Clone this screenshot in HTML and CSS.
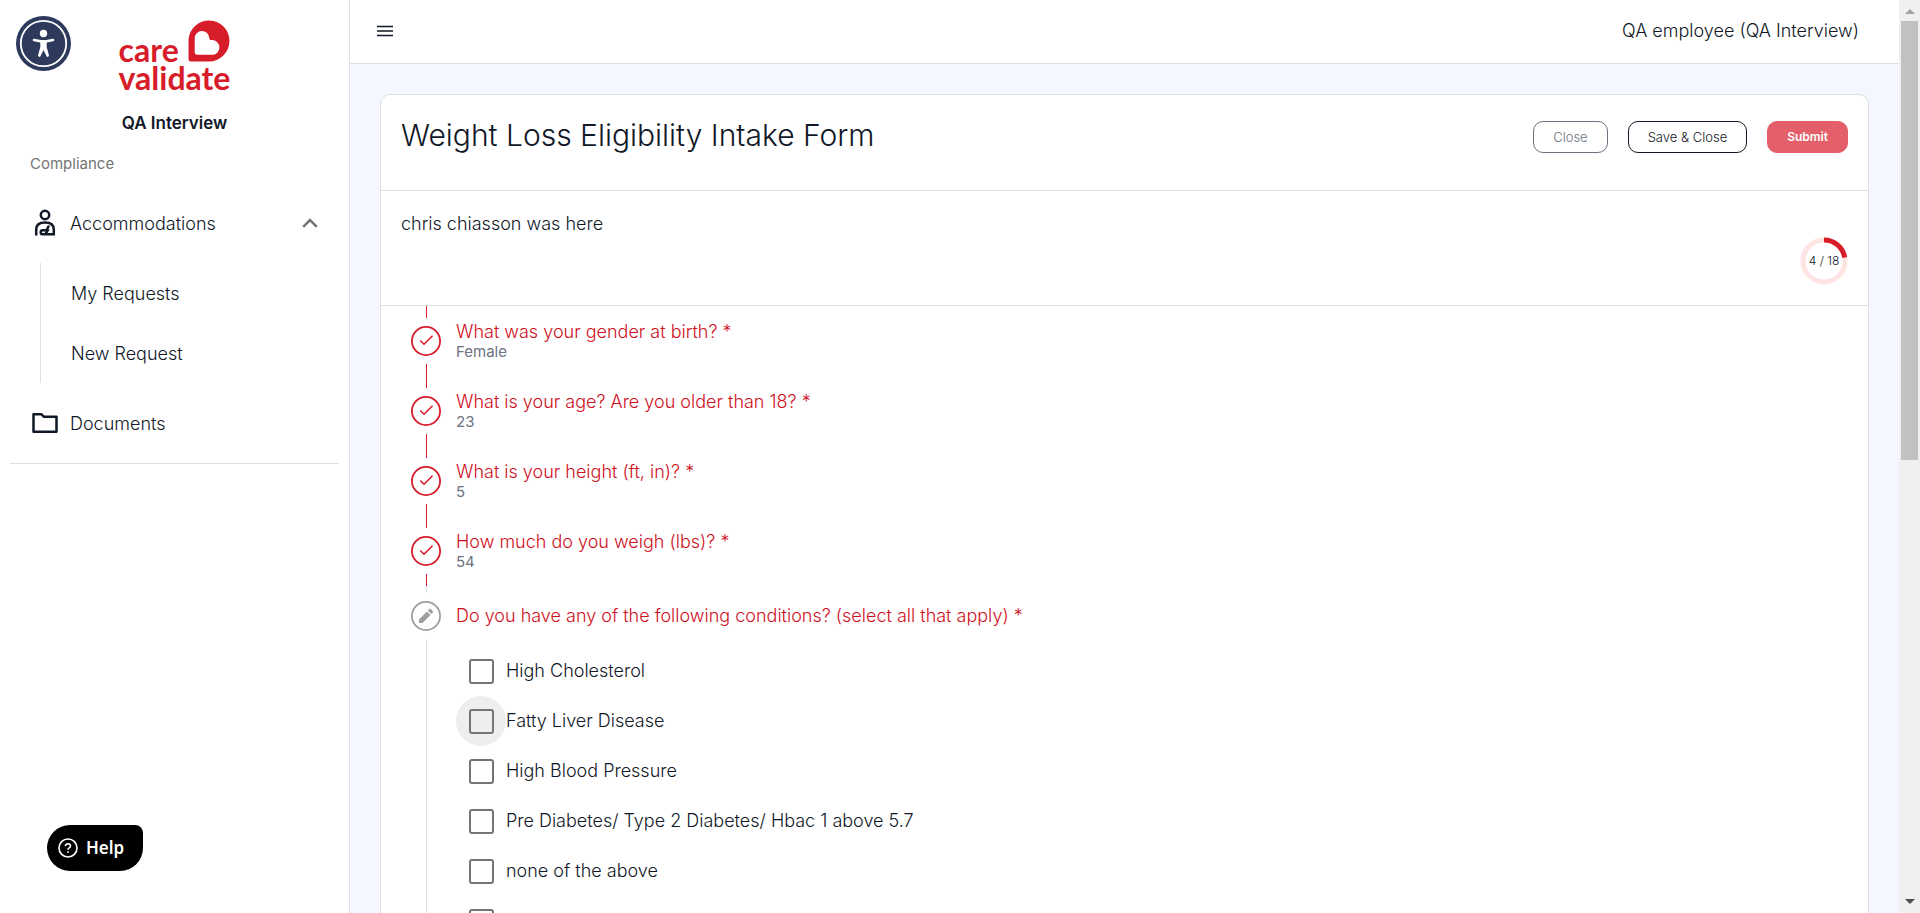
FILE: index.html
```html
<!DOCTYPE html>
<html lang="en">
<head>
<meta charset="utf-8">
<title>Weight Loss Eligibility Intake Form</title>
<link rel="stylesheet" href="styles.css">
</head>
<body>
<div class="app">
  <aside class="sidebar">
    <div class="brand">
      <div class="logo">
        <div class="logo-top">
          <span class="logo-word">care</span>
          <svg class="logo-mark" viewBox="0 0 42 42" aria-hidden="true"><path fill="#d71c2a" fill-rule="evenodd" d="M3 41.500Q.5 41.500.5 39V20A20.500 20.500 0 1 1 21 41.500ZM9.500 34.800Q6.700 34.800 6.700 32V18.500A7.300 7.300 0 0 1 21.300 18.200Q21.300 20 22.600 20H24A7.300 7.300 0 0 1 24 34.800Z"/></svg>
        </div>
        <span class="logo-word">validate</span>
      </div>
      <p class="org">QA Interview</p>
    </div>
    <p class="section-label">Compliance</p>
    <nav class="nav">
      <button class="nav-row" type="button" aria-expanded="true">
        <svg class="nav-icon" viewBox="0 0 30 30" fill="none" stroke="#111827" stroke-width="2.500" aria-hidden="true"><circle cx="15" cy="7" r="4.200"/><path d="M6.200 27.500V21.500Q6.200 14.500 15 14.500Q23.800 14.500 23.800 21.500V26.300H12.500Q10.700 26.300 10.700 24.300T12.700 22.300H16.500L19 17.500M15.500 26L18.500 21"/></svg>
        <span>Accommodations</span>
        <svg class="chevron" viewBox="0 0 16 10" fill="none" stroke="#757575" stroke-width="2.600" aria-hidden="true"><path d="M1.200 8.800 8 2l6.800 6.800"/></svg>
      </button>
      <div class="subnav">
        <a href="#my-requests">My Requests</a>
        <a href="#new-request">New Request</a>
      </div>
      <a class="nav-row" href="#documents">
        <svg class="nav-icon" viewBox="0 0 30 30" fill="none" stroke="#111827" stroke-width="2.500" stroke-linejoin="round" aria-hidden="true"><path d="M3.500 6.300H11.500L14 8.800H26.500V23.700H3.500Z"/></svg>
        <span>Documents</span>
      </a>
    </nav>
  </aside>

  <div class="main">
    <header class="topbar">
      <button class="menu" type="button" aria-label="Toggle menu">
        <svg viewBox="0 0 16 12" aria-hidden="true"><path d="M0 1.500H16M0 6H16M0 10.500H16" stroke="#111827" stroke-width="1.600"/></svg>
      </button>
      <span>QA employee (QA Interview)</span>
    </header>

    <main class="content">
      <section class="card">
        <div class="card-head">
          <h1>Weight Loss Eligibility Intake Form</h1>
          <div class="actions">
            <button class="btn btn-muted" type="button">Close</button>
            <button class="btn btn-dark" type="button">Save &amp; Close</button>
            <button class="btn btn-primary" type="button">Submit</button>
          </div>
        </div>
        <div class="intro">
          <p>chris chiasson was here</p>
          <div class="progress">
            <svg viewBox="0 0 48 48" fill="none" stroke-width="5" aria-hidden="true"><circle cx="24" cy="24" r="21" stroke="#ffe4e4"/><circle cx="24" cy="24" r="21" stroke="#d71c2a" pathLength="18" stroke-dasharray="4 14" transform="rotate(-90 24 24)"/></svg>
            <span>4 / 18</span>
          </div>
        </div>

        <div class="stepper">
          <div class="line line-short"></div>
          <div class="step">
            <svg class="mark" viewBox="0 0 30 30" aria-hidden="true"><use href="#done"/></svg>
            <div class="step-text"><p class="question">What was your gender at birth? *</p><p class="answer">Female</p></div>
          </div>
          <div class="line"></div>
          <div class="step">
            <svg class="mark" viewBox="0 0 30 30" aria-hidden="true"><use href="#done"/></svg>
            <div class="step-text"><p class="question">What is your age? Are you older than 18? *</p><p class="answer">23</p></div>
          </div>
          <div class="line"></div>
          <div class="step">
            <svg class="mark" viewBox="0 0 30 30" aria-hidden="true"><use href="#done"/></svg>
            <div class="step-text"><p class="question">What is your height (ft, in)? *</p><p class="answer">5</p></div>
          </div>
          <div class="line"></div>
          <div class="step">
            <svg class="mark" viewBox="0 0 30 30" aria-hidden="true"><use href="#done"/></svg>
            <div class="step-text"><p class="question">How much do you weigh (lbs)? *</p><p class="answer">54</p></div>
          </div>
          <div class="line line-short"></div>
          <div class="line line-next"></div>
          <div class="step">
            <svg class="mark" viewBox="0 0 30 30" aria-hidden="true"><circle cx="15" cy="15" r="14.100" fill="none" stroke="#9e9e9e" stroke-width="1.800"/><path fill="#9e9e9e" d="M8 18.500V22H11.500L19.500 14 16 10.500ZM16.900 9.600 20.400 13.100 21.900 11.600Q22.600 10.900 21.900 10.200L19.800 8.100Q19.100 7.400 18.400 8.100Z"/></svg>
            <p class="question" id="conditions">Do you have any of the following conditions? (select all that apply) *</p>
          </div>
          <div class="options" role="group" aria-labelledby="conditions">
            <label class="option"><span class="tick"><input type="checkbox"></span>High Cholesterol</label>
            <label class="option"><span class="tick tick-active"><input type="checkbox"></span>Fatty Liver Disease</label>
            <label class="option"><span class="tick"><input type="checkbox"></span>High Blood Pressure</label>
            <label class="option"><span class="tick"><input type="checkbox"></span>Pre Diabetes/ Type 2 Diabetes/ Hbac 1 above 5.7</label>
            <label class="option"><span class="tick"><input type="checkbox"></span>none of the above</label>
            <label class="option"><span class="tick"><input type="checkbox" aria-label="Other"></span></label>
          </div>
        </div>
      </section>
    </main>
  </div>

  <div class="scrollbar" aria-hidden="true">
    <span class="arrow arrow-up"></span>
    <span class="thumb"></span>
    <span class="arrow arrow-down"></span>
  </div>
</div>

<button class="a11y" type="button" aria-label="Accessibility">
  <svg viewBox="0 0 55 55" aria-hidden="true"><circle cx="27.500" cy="27.500" r="27.500" fill="#2d3a5c"/><circle cx="27.500" cy="27.500" r="22.700" fill="none" stroke="#fff" stroke-width="1.800"/><circle cx="27.500" cy="17.500" r="3.700" fill="#fff"/><path fill="none" stroke="#fff" stroke-width="2.600" stroke-linecap="round" stroke-linejoin="round" d="M18 24 24.500 25.300H30.500L37 24"/><path d="M24.300 25H30.700V31L33 39.500Q32.300 41.600 30.700 40.500L27.500 34 24.300 40.500Q22.700 41.600 22 39.500L24.300 31Z" fill="#fff"/></svg>
</button>
<button class="help" type="button">
  <svg viewBox="0 0 20 20" fill="none" stroke="#fff" stroke-width="1.600" aria-hidden="true"><circle cx="10" cy="10" r="9"/><path d="M7.500 8Q7.500 5.700 10 5.700T12.500 8Q12.500 9.200 11.200 9.900T10 11.700"/><circle cx="10" cy="14" r=".5" fill="#fff" stroke-width="1"/></svg>
  <span>Help</span>
</button>

<svg width="0" height="0" class="defs" aria-hidden="true">
  <symbol id="done" viewBox="0 0 30 30"><circle cx="15" cy="15" r="14.100" fill="none" stroke="#d71c2a" stroke-width="1.800"/><path d="M9.300 14.500 13 18.200 21.500 9.700" fill="none" stroke="#d71c2a" stroke-width="1.600"/></symbol>
</svg>
</body>
</html>
```
FILE: styles.css
```css
* { box-sizing: border-box; }

body {
  margin: 0;
  overflow: hidden;
  background: #fff;
  color: #111827;
  font-family: Inter, "Liberation Sans", sans-serif;
  font-size: 18px;
  font-weight: 300;
  line-height: 26px;
}

p, h1 { margin: 0; }
a { color: inherit; text-decoration: none; }
button { font: inherit; color: inherit; padding: 0; border: 0; background: none; cursor: pointer; }
svg { display: block; }
.defs { position: absolute; }

.app {
  display: grid;
  grid-template-columns: 350px minmax(0, 1fr) 21px;
  height: 100vh;
}

/* Sidebar */
.sidebar { border-right: 1px solid #e0e0e0; background: #fff; }
.brand { display: flex; flex-direction: column; align-items: center; padding-top: 20px; }
.logo { color: #d71c2a; font-family: Lato, sans-serif; font-weight: 700; font-size: 32px; line-height: 28px; }
.logo-top { display: flex; align-items: flex-end; justify-content: space-between; height: 44px; }
.logo-mark { width: 42px; height: 42px; margin-bottom: 2px; }
.logo-word { display: block; }
.org { margin-top: 18px; font-size: 17px; font-weight: 600; }
.section-label { padding: 15px 30px 0; color: #757575; font-size: 15px; font-weight: 400; }
.nav { margin: 16px 10px 0; padding-bottom: 10px; border-bottom: 1px solid #e0e0e0; }
.nav-row { display: flex; align-items: center; width: 100%; height: 60px; padding: 0 21px 0 20px; text-align: left; }
.nav-row span { padding-top: 2px; }
.nav-icon { width: 30px; height: 30px; margin-right: 10px; }
.chevron { width: 16px; height: 10px; margin-left: auto; }
.subnav { margin: 10px 0 10px 30px; border-left: 1px solid #e0e0e0; }
.subnav a { display: flex; align-items: center; height: 60px; padding: 2px 0 0 30px; }

/* Main column */
.main { display: flex; flex-direction: column; min-width: 0; min-height: 0; }
.topbar {
  display: flex; flex: none; align-items: center; justify-content: space-between;
  height: 64px; padding: 0 40px 2px 27px;
  border-bottom: 1px solid #e0e0e0; background: #fff;
}
.menu svg { width: 16px; height: 12px; }
.content { flex: 1; min-height: 0; overflow: hidden; padding: 30px; background: #f4f7ff; }
.card { border: 1px solid #e0e0e0; border-radius: 10px; background: #fff; }
.card-head {
  display: flex; align-items: flex-start; justify-content: space-between;
  height: 96px; padding: 20px; border-bottom: 1px solid #e0e0e0;
}
h1 { font-size: 30px; font-weight: 300; line-height: 40px; }
.actions { display: flex; gap: 20px; padding-top: 6px; }
.btn { height: 32px; padding: 0 19px; border: 1px solid; border-radius: 10px; font-size: 13px; font-weight: 300; line-height: 20px; }
.btn-muted { color: #6b7280; }
.btn-dark { color: #111827; }
.btn-primary { border-color: #e35f69; background: #e35f69; color: #fff; font-size: 12px; font-weight: 600; }

.intro {
  display: flex; justify-content: space-between;
  height: 115px; padding: 20px; border-bottom: 1px solid #e0e0e0;
}
.progress { display: grid; place-items: center; align-self: flex-end; width: 48px; height: 48px; font-size: 12px; }
.progress > * { grid-area: 1 / 1; }
.progress svg { width: 48px; height: 48px; }

/* Stepper */
.stepper { padding: 0 20px 30px 30px; }
.line { width: 1px; height: 24px; margin-left: 15px; background: #d71c2a; }
.line-short { height: 12px; }
.line-next { height: 7px; background: #e0e0e0; }
.step { display: flex; align-items: center; height: 46px; }
.step-text { padding-top: 2px; }
.mark { width: 30px; height: 30px; margin-right: 15px; }
.question { color: #d00f1e; font-weight: 350; line-height: 20px; }
.answer { color: #6b7280; font-size: 15px; font-weight: 400; line-height: 20px; }

.options { margin-left: 15px; padding: 7px 0 0 29px; border-left: 1px solid #e0e0e0; }
.option { display: flex; align-items: center; height: 50px; }
.tick { display: grid; place-items: center; width: 50px; height: 50px; border-radius: 50%; }
.tick-active { background: #eee; }
.tick input { appearance: none; width: 25px; height: 25px; margin: 0; border: 2px solid #757575; border-radius: 3px; }
.tick input:checked { background: #d71c2a; }

/* Page scrollbar */
.scrollbar { display: flex; flex-direction: column; align-items: center; padding: 9px 2px; background: #f0f0f0; }
.thumb { width: 100%; height: 49%; margin-top: 7px; background: #c1c1c1; }
.arrow { border: 5px solid transparent; }
.arrow-up { border-top: 0; border-bottom-color: #a3a3a3; }
.arrow-down { margin-top: auto; border-bottom: 0; border-top-color: #505050; }

/* Floating buttons */
.a11y { position: fixed; top: 16px; left: 16px; width: 55px; height: 55px; border-radius: 50%; }
.help {
  position: fixed; left: 47px; bottom: 42px;
  display: flex; align-items: center; gap: 8px;
  height: 46px; padding: 0 19px 0 11px;
  border-radius: 23px 8px 23px 23px; background: #000; color: #fff;
  font-family: "Noto Sans", sans-serif; font-size: 17px; font-weight: 600;
}
.help svg { width: 20px; height: 20px; }
```
